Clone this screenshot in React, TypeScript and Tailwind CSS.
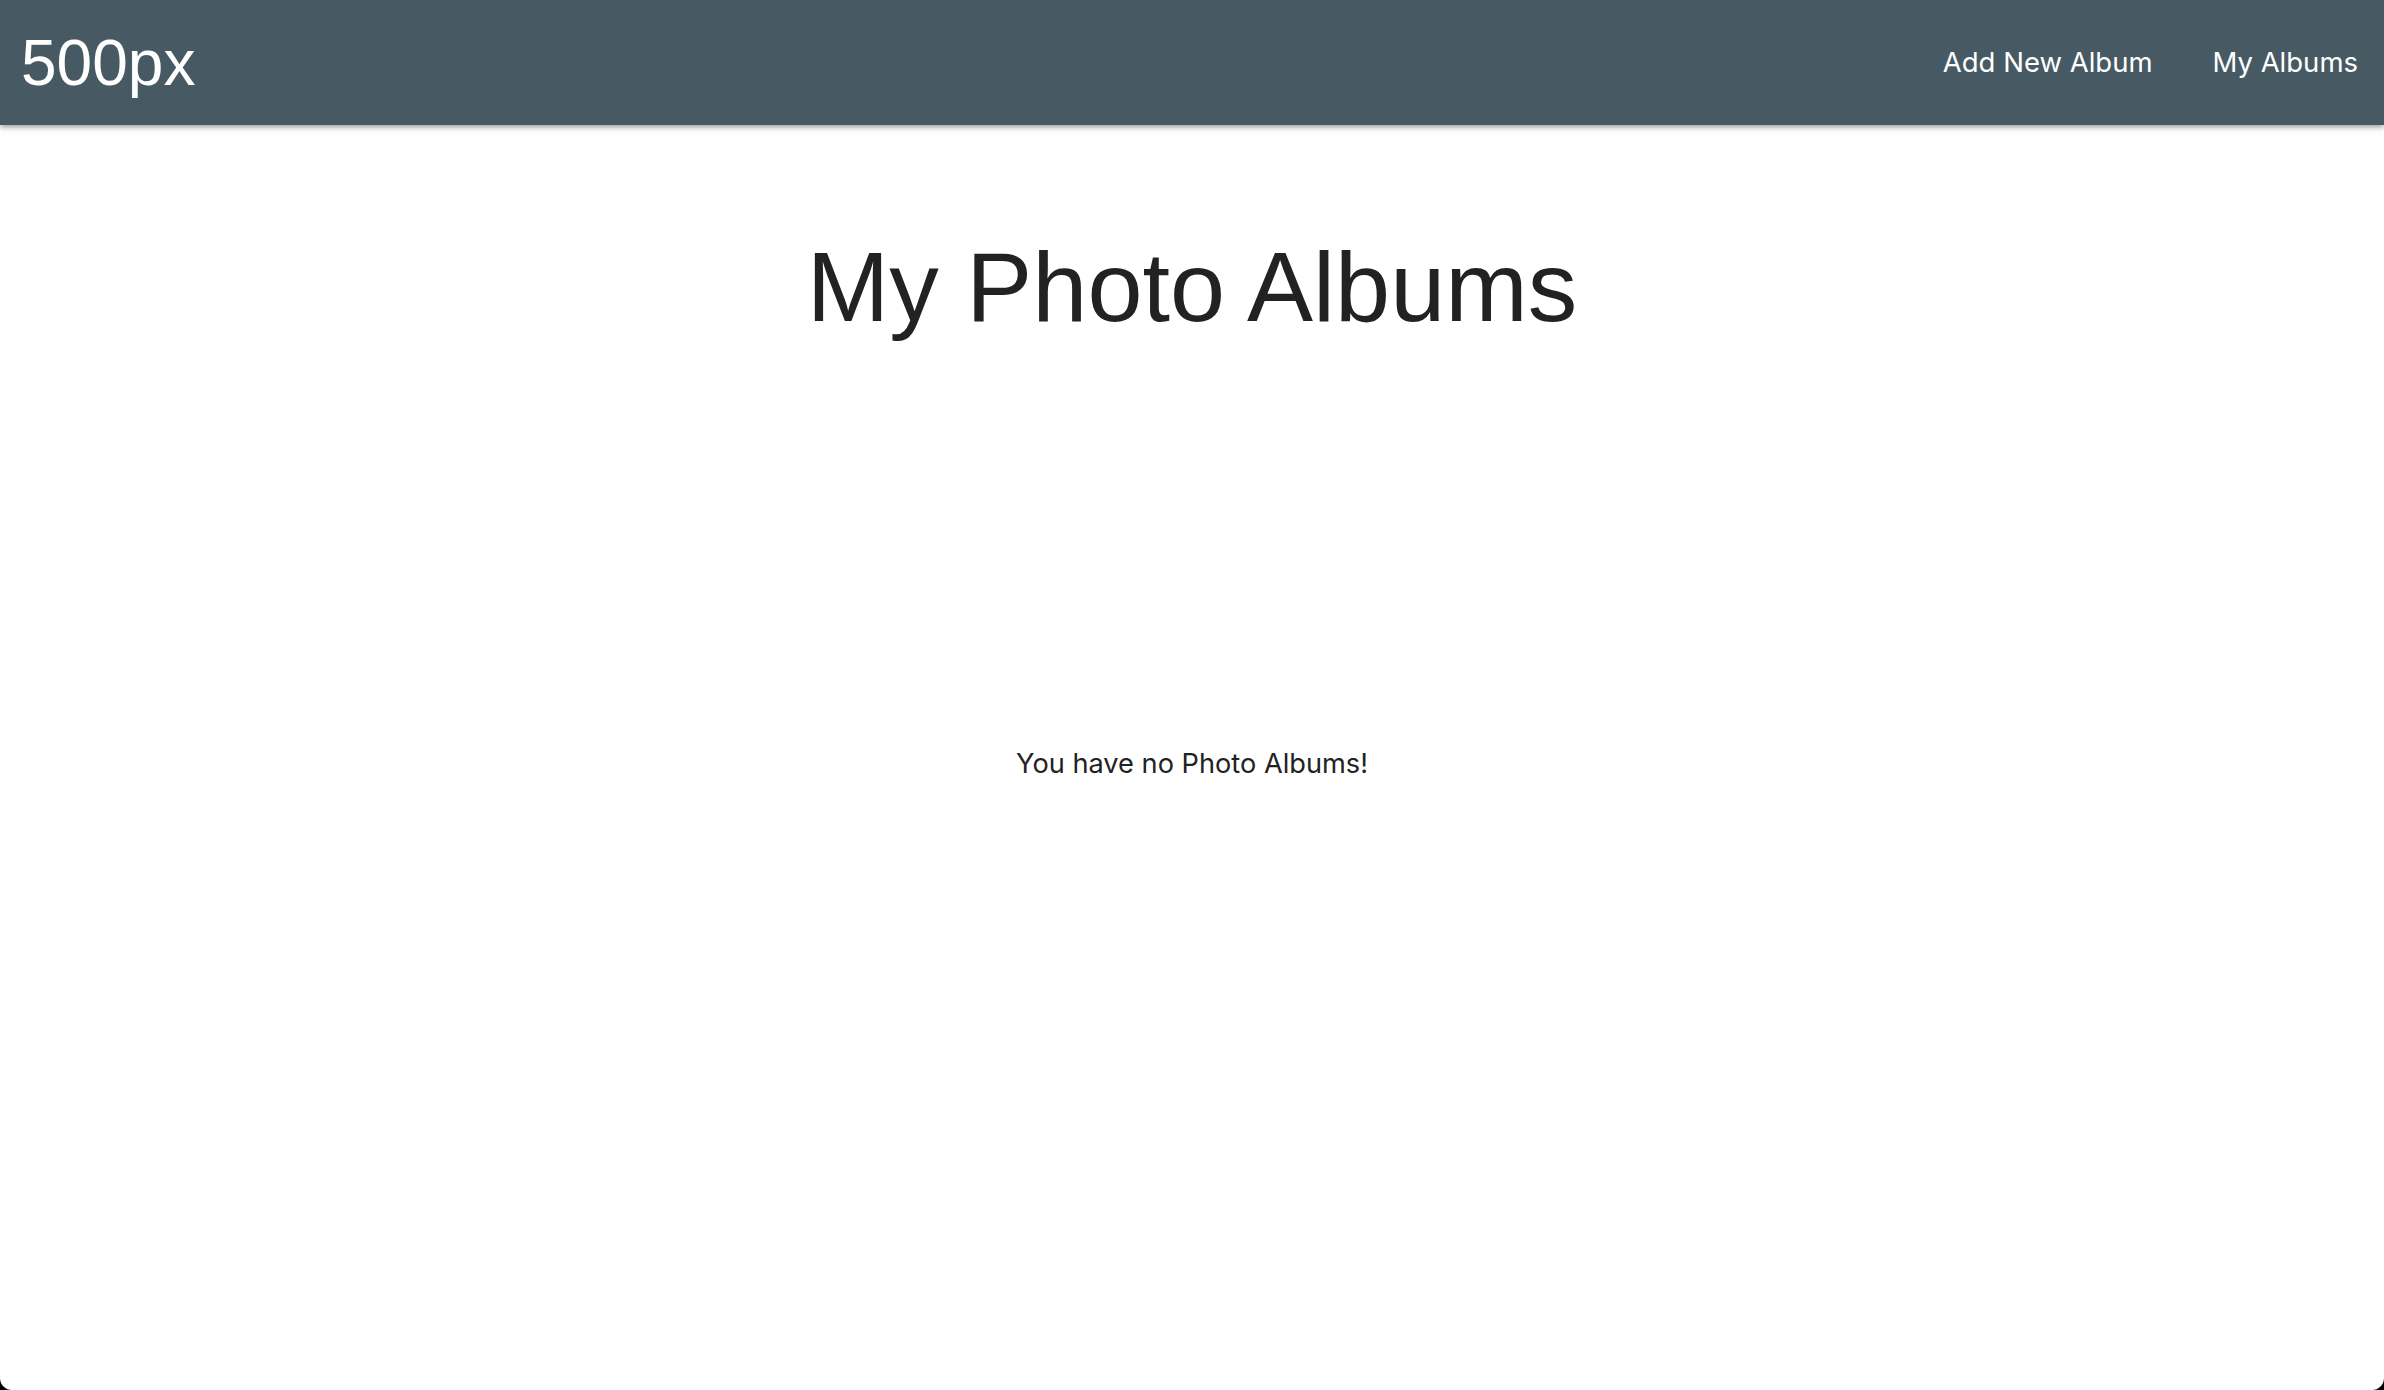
import React from "react";

export default function App() {
  return (
    <div className="w-full h-[1390px] bg-black">
      <div className="relative w-full h-full bg-white rounded-b-[12px] overflow-hidden flex flex-col">
        <header className="h-[125px] shrink-0 bg-[#475a64] flex items-center justify-between pl-[21px] pr-[26px] shadow-[0_2px_4px_rgba(0,0,0,0.25),0_4px_6px_rgba(0,0,0,0.12)] z-10">
          <div className="text-white text-[64px] leading-none" style={{ fontFamily: '"Liberation Sans", Arial, sans-serif' }}>
            500px
          </div>
          <nav className="flex items-center gap-[60px] text-white text-[27.5px] leading-none" style={{ fontFamily: 'Inter, "Noto Sans", sans-serif' }}>
            <span>Add New Album</span>
            <span>My Albums</span>
          </nav>
        </header>
        <main className="flex flex-col items-center">
          <h1 className="mt-[112px] text-[99px] leading-none text-[#222222]" style={{ fontFamily: '"Liberation Sans", Arial, sans-serif' }}>
            My Photo Albums
          </h1>
          <p className="mt-[414px] text-[27.2px] leading-none text-[#222222]" style={{ fontFamily: 'Inter, "Noto Sans", sans-serif' }}>
            You have no Photo Albums!
          </p>
        </main>
      </div>
    </div>
  );
}
